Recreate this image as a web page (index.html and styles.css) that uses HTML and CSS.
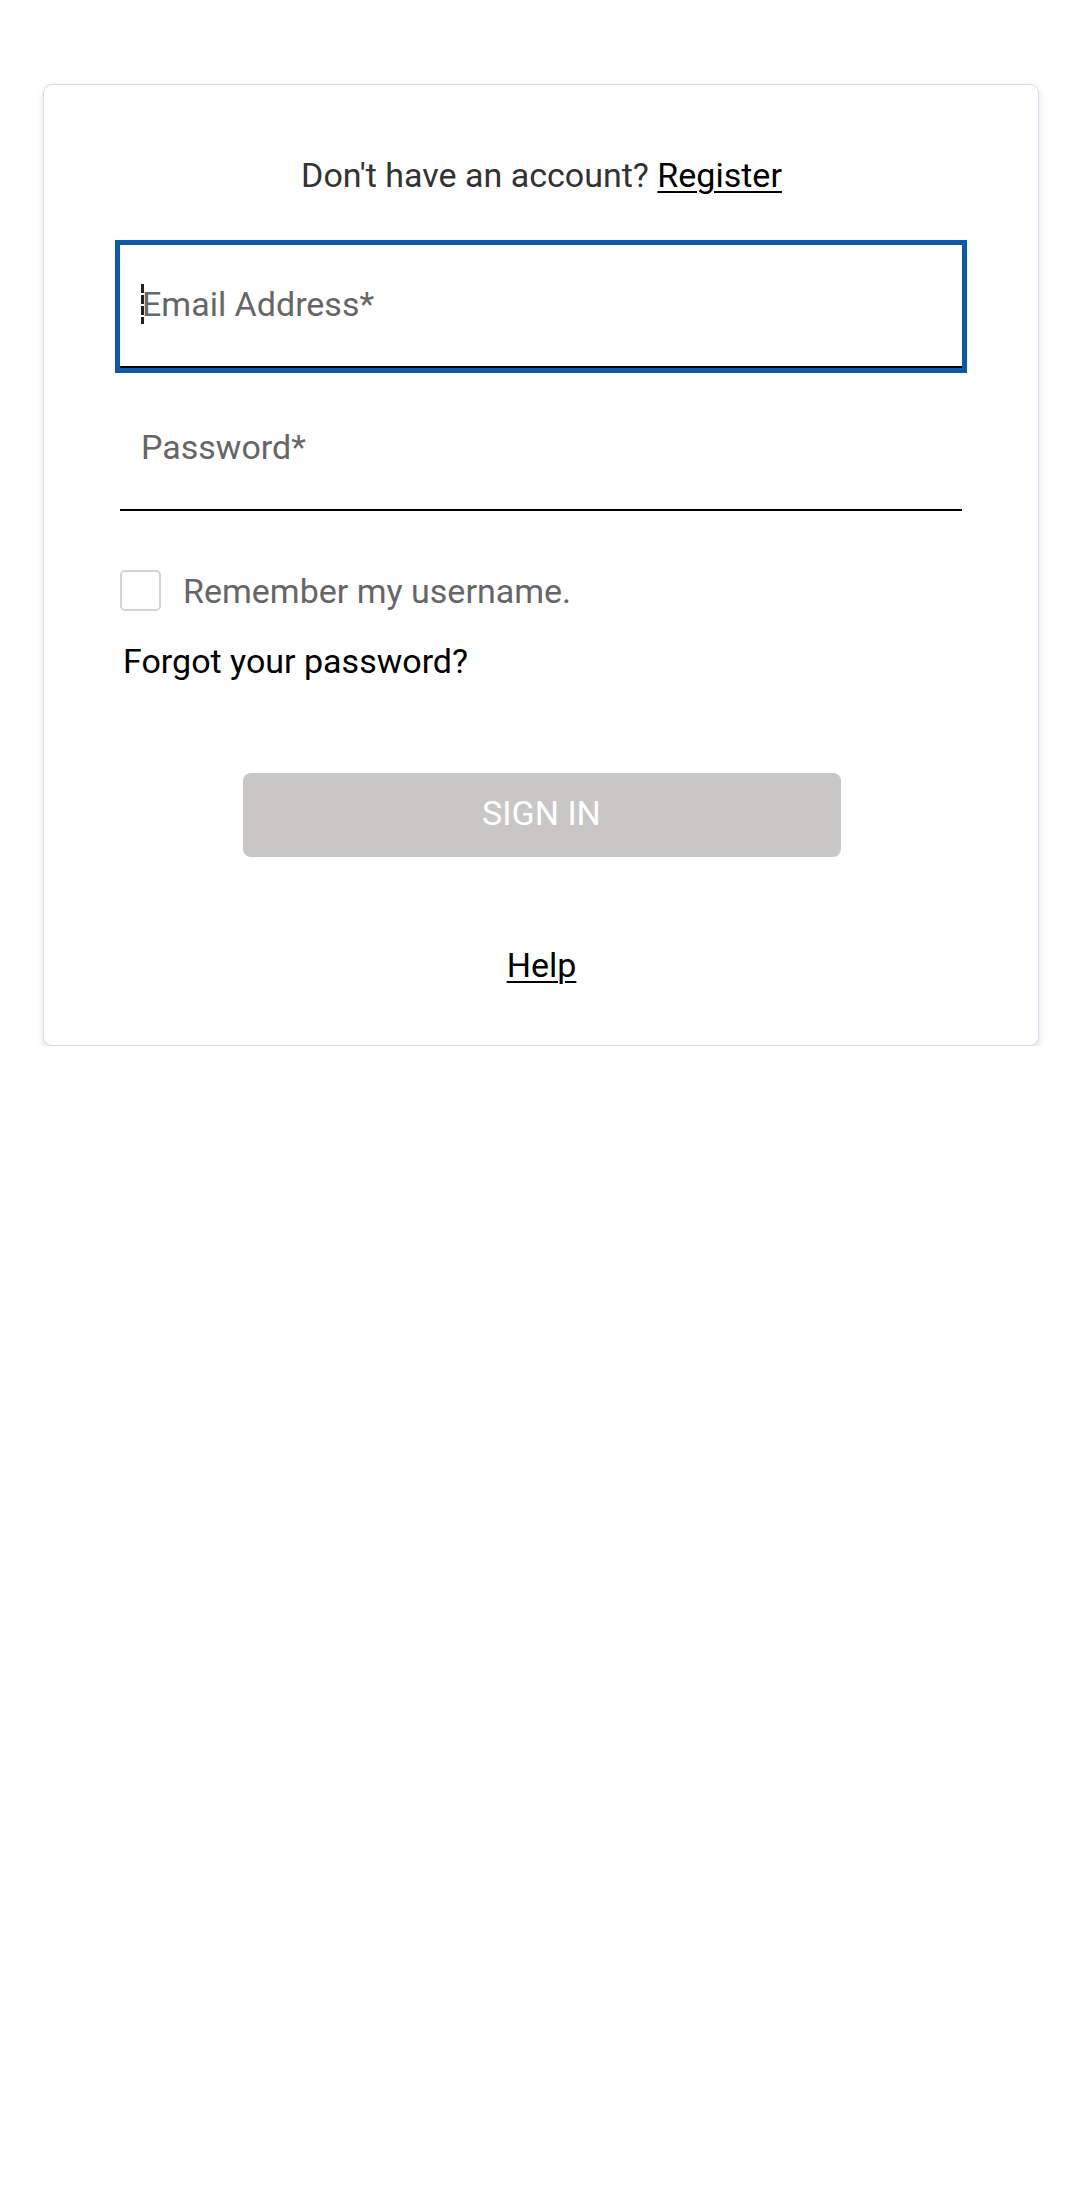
FILE: index.html
```html
<!DOCTYPE html>
<html lang="en">
<head>
<meta charset="utf-8">
<title>Sign in</title>
<link rel="stylesheet" href="styles.css">
</head>
<body>
<main class="card">
  <p class="prompt">Don't have an account? <a class="link" href="#">Register</a></p>
  <div class="field field-focused">
    <span class="caret"></span><span class="placeholder">Email Address*</span>
  </div>
  <div class="field field-second">
    <span class="placeholder">Password*</span>
  </div>
  <label class="remember">
    <span class="checkbox"></span>
    <span class="remember-text">Remember my username.</span>
  </label>
  <a class="forgot" href="#">Forgot your password?</a>
  <button class="signin" type="button">SIGN IN</button>
  <div class="help-row"><a class="link" href="#">Help</a></div>
</main>
</body>
</html>
```
FILE: styles.css
```css
html, body {
  margin: 0;
  padding: 0;
  background: #fefefe;
}

body {
  font-family: Roboto, "Noto Sans", "Liberation Sans", sans-serif;
  font-size: 34px;
  line-height: 40px;
  color: #000;
}

.card {
  box-sizing: border-box;
  width: 996px;
  margin: 84px 0 0 43px;
  padding: 70px 75px 60px 76px;
  background: #fff;
  border: 1px solid #d9dbea;
  border-radius: 9px;
  box-shadow: 0 3px 6px rgba(40, 50, 90, 0.14);
  display: flex;
  flex-direction: column;
  align-items: flex-start;
}

.prompt {
  margin: 0;
  align-self: stretch;
  text-align: center;
  color: #333;
}

.link {
  color: #000;
  text-decoration: underline;
  text-decoration-thickness: 2px;
  text-underline-offset: 4px;
}

.field {
  box-sizing: border-box;
  width: 842px;
  height: 123px;
  padding: 39px 0 0 21px;
  border-bottom: 2px solid #000;
  display: flex;
  align-items: flex-start;
}

.field-focused {
  margin-top: 50px;
  outline: 5px solid #0c5aa7;
}

.field-second {
  margin-top: 20px;
}

.placeholder {
  color: #666;
}

.caret {
  display: inline-block;
  width: 3px;
  height: 40px;
  margin-right: -2px;
  background: repeating-linear-gradient(to bottom, #222 0 9px, #fff 9px 11px);
}

.remember {
  margin-top: 59px;
  display: flex;
  align-items: center;
  gap: 22px;
  color: #666;
}

.checkbox {
  box-sizing: border-box;
  width: 41px;
  height: 41px;
  border: 2px solid #d4d4d4;
  border-radius: 5px;
  background: #fff;
}

.forgot {
  margin-top: 30px;
  padding-left: 3px;
  color: #000;
  text-decoration: none;
}

.signin {
  align-self: center;
  margin-top: 92px;
  width: 598px;
  height: 84px;
  padding: 0 0 4px;
  border: none;
  border-radius: 8px;
  background: #c8c7c5;
  color: #fff;
  font-family: inherit;
  font-size: 34px;
  line-height: 40px;
}

.help-row {
  align-self: stretch;
  margin-top: 88px;
  text-align: center;
}
```
